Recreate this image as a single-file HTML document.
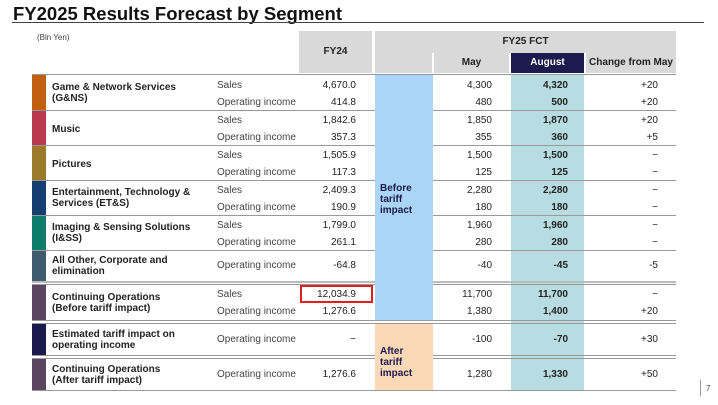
<!DOCTYPE html><html><head><style>
body{margin:0;width:718px;height:405px;background:#fff;font-family:"Liberation Sans","DejaVu Sans",sans-serif;position:relative;overflow:hidden;color:#222}
div{position:absolute;box-sizing:border-box}
.t{font-size:10px;white-space:nowrap;line-height:12px}
.b{font-weight:bold}
.r{text-align:right}
.c{text-align:center}
.hl{height:1px;background:#999;left:32px;width:644px}
</style></head><body>
<div style="left:13px;top:3px;font-size:18.5px;font-weight:bold;color:#111;white-space:nowrap">FY2025 Results Forecast by Segment</div>
<div style="left:12px;top:22px;width:692px;height:1px;background:#444"></div>
<div class="t" style="left:37px;top:32px;font-size:8px;color:#444">(Bln Yen)</div>
<div style="left:299px;top:31px;width:73px;height:42px;background:#d9d9d9"></div>
<div class="t b c" style="left:299px;top:46px;width:73px">FY24</div>
<div style="left:375px;top:31px;width:301px;height:22px;background:#d9d9d9"></div>
<div style="left:375px;top:53px;width:57px;height:20px;background:#d9d9d9"></div>
<div class="t b c" style="left:375px;top:36px;width:301px">FY25 FCT</div>
<div style="left:434px;top:53px;width:75px;height:20px;background:#d9d9d9"></div>
<div class="t b c" style="left:434px;top:57px;width:75px">May</div>
<div style="left:511px;top:53px;width:73px;height:20px;background:#1c1a4e"></div>
<div class="t b c" style="left:511px;top:57px;width:73px;color:#fff">August</div>
<div style="left:586px;top:53px;width:90px;height:20px;background:#d9d9d9"></div>
<div class="t b c" style="left:586px;top:57px;width:90px">Change from May</div>
<div class="hl" style="top:74px"></div>
<div style="left:511px;top:75px;width:73px;height:315px;background:#b7dde2"></div>

<div style="left:32px;top:75px;width:14px;height:35px;background:#c06010"></div>
<div style="left:32px;top:110px;width:14px;height:35px;background:#b83a4c"></div>
<div style="left:32px;top:145px;width:14px;height:35px;background:#9c7a2c"></div>
<div style="left:32px;top:180px;width:14px;height:35px;background:#143e70"></div>
<div style="left:32px;top:215px;width:14px;height:35px;background:#0c7d6c"></div>
<div style="left:32px;top:250px;width:14px;height:31px;background:#3e5b6e"></div>
<div style="left:32px;top:285px;width:14px;height:35px;background:#5a4660"></div>
<div style="left:32px;top:324px;width:14px;height:31px;background:#1a1a4e"></div>
<div style="left:32px;top:358px;width:14px;height:32px;background:#5a4660"></div>

<div class="hl" style="top:110px"></div><div class="hl" style="top:145px"></div>
<div class="hl" style="top:180px"></div><div class="hl" style="top:215px"></div>
<div class="hl" style="top:250px"></div><div class="hl" style="top:281px;height:2px;background:#bbb"></div>
<div class="hl" style="top:284px"></div><div class="hl" style="top:320px"></div>
<div class="hl" style="top:323px"></div><div class="hl" style="top:355px"></div>
<div class="hl" style="top:358px"></div><div class="hl" style="top:390px"></div>
<div style="left:375px;top:75px;width:58px;height:245px;background:#aad4f8"></div>
<div class="t b" style="left:380px;top:183px;line-height:11px;color:#1c1a4e">Before<br>tariff<br>impact</div>
<div style="left:375px;top:324px;width:58px;height:66px;background:#fcd9b6"></div>
<div class="t b" style="left:380px;top:346px;line-height:11px;color:#1c1a4e">After<br>tariff<br>impact</div>

<div class="t b" style="left:52px;top:82px;line-height:11px">Game &amp; Network Services<br>(G&amp;NS)</div>
<div class="t b" style="left:52px;top:124px">Music</div>
<div class="t b" style="left:52px;top:159px">Pictures</div>
<div class="t b" style="left:52px;top:187px;line-height:11px">Entertainment, Technology &amp;<br>Services (ET&amp;S)</div>
<div class="t b" style="left:52px;top:222px;line-height:11px">Imaging &amp; Sensing Solutions<br>(I&amp;SS)</div>
<div class="t b" style="left:52px;top:255px;line-height:11px">All Other, Corporate and<br>elimination</div>
<div class="t b" style="left:52px;top:292px;line-height:11px">Continuing Operations<br>(Before tariff impact)</div>
<div class="t b" style="left:52px;top:329px;line-height:11px">Estimated tariff impact on<br>operating income</div>
<div class="t b" style="left:52px;top:364px;line-height:11px">Continuing Operations<br>(After tariff impact)</div>

<div style="left:0;top:0;width:718px;height:405px">
<div class="t" style="left:217px;top:80px;color:#444">Sales</div><div class="t r" style="left:296px;width:60px;top:80px">4,670.0</div><div class="t r" style="left:432px;width:60px;top:80px">4,300</div><div class="t r b" style="left:508px;width:60px;top:80px">4,320</div><div class="t r" style="left:598px;width:60px;top:80px">+20</div>
<div class="t" style="left:217px;top:97px;color:#444">Operating income</div><div class="t r" style="left:296px;width:60px;top:97px">414.8</div><div class="t r" style="left:432px;width:60px;top:97px">480</div><div class="t r b" style="left:508px;width:60px;top:97px">500</div><div class="t r" style="left:598px;width:60px;top:97px">+20</div>
<div class="t" style="left:217px;top:115px;color:#444">Sales</div><div class="t r" style="left:296px;width:60px;top:115px">1,842.6</div><div class="t r" style="left:432px;width:60px;top:115px">1,850</div><div class="t r b" style="left:508px;width:60px;top:115px">1,870</div><div class="t r" style="left:598px;width:60px;top:115px">+20</div>
<div class="t" style="left:217px;top:132px;color:#444">Operating income</div><div class="t r" style="left:296px;width:60px;top:132px">357.3</div><div class="t r" style="left:432px;width:60px;top:132px">355</div><div class="t r b" style="left:508px;width:60px;top:132px">360</div><div class="t r" style="left:598px;width:60px;top:132px">+5</div>
<div class="t" style="left:217px;top:150px;color:#444">Sales</div><div class="t r" style="left:296px;width:60px;top:150px">1,505.9</div><div class="t r" style="left:432px;width:60px;top:150px">1,500</div><div class="t r b" style="left:508px;width:60px;top:150px">1,500</div><div class="t r" style="left:598px;width:60px;top:150px">−</div>
<div class="t" style="left:217px;top:167px;color:#444">Operating income</div><div class="t r" style="left:296px;width:60px;top:167px">117.3</div><div class="t r" style="left:432px;width:60px;top:167px">125</div><div class="t r b" style="left:508px;width:60px;top:167px">125</div><div class="t r" style="left:598px;width:60px;top:167px">−</div>
<div class="t" style="left:217px;top:185px;color:#444">Sales</div><div class="t r" style="left:296px;width:60px;top:185px">2,409.3</div><div class="t r" style="left:432px;width:60px;top:185px">2,280</div><div class="t r b" style="left:508px;width:60px;top:185px">2,280</div><div class="t r" style="left:598px;width:60px;top:185px">−</div>
<div class="t" style="left:217px;top:202px;color:#444">Operating income</div><div class="t r" style="left:296px;width:60px;top:202px">190.9</div><div class="t r" style="left:432px;width:60px;top:202px">180</div><div class="t r b" style="left:508px;width:60px;top:202px">180</div><div class="t r" style="left:598px;width:60px;top:202px">−</div>
<div class="t" style="left:217px;top:220px;color:#444">Sales</div><div class="t r" style="left:296px;width:60px;top:220px">1,799.0</div><div class="t r" style="left:432px;width:60px;top:220px">1,960</div><div class="t r b" style="left:508px;width:60px;top:220px">1,960</div><div class="t r" style="left:598px;width:60px;top:220px">−</div>
<div class="t" style="left:217px;top:237px;color:#444">Operating income</div><div class="t r" style="left:296px;width:60px;top:237px">261.1</div><div class="t r" style="left:432px;width:60px;top:237px">280</div><div class="t r b" style="left:508px;width:60px;top:237px">280</div><div class="t r" style="left:598px;width:60px;top:237px">−</div>
<div class="t" style="left:217px;top:260px;color:#444">Operating income</div><div class="t r" style="left:296px;width:60px;top:260px">-64.8</div><div class="t r" style="left:432px;width:60px;top:260px">-40</div><div class="t r b" style="left:508px;width:60px;top:260px">-45</div><div class="t r" style="left:598px;width:60px;top:260px">-5</div>
<div style="left:300px;top:285px;width:73px;height:18px;border:2px solid #e02020"></div>
<div class="t" style="left:217px;top:289px;color:#444">Sales</div><div class="t r" style="left:296px;width:60px;top:289px">12,034.9</div><div class="t r" style="left:432px;width:60px;top:289px">11,700</div><div class="t r b" style="left:508px;width:60px;top:289px">11,700</div><div class="t r" style="left:598px;width:60px;top:289px">−</div>
<div class="t" style="left:217px;top:306px;color:#444">Operating income</div><div class="t r" style="left:296px;width:60px;top:306px">1,276.6</div><div class="t r" style="left:432px;width:60px;top:306px">1,380</div><div class="t r b" style="left:508px;width:60px;top:306px">1,400</div><div class="t r" style="left:598px;width:60px;top:306px">+20</div>
<div class="t" style="left:217px;top:334px;color:#444">Operating income</div><div class="t r" style="left:296px;width:60px;top:334px">−</div><div class="t r" style="left:432px;width:60px;top:334px">-100</div><div class="t r b" style="left:508px;width:60px;top:334px">-70</div><div class="t r" style="left:598px;width:60px;top:334px">+30</div>
<div class="t" style="left:217px;top:369px;color:#444">Operating income</div><div class="t r" style="left:296px;width:60px;top:369px">1,276.6</div><div class="t r" style="left:432px;width:60px;top:369px">1,280</div><div class="t r b" style="left:508px;width:60px;top:369px">1,330</div><div class="t r" style="left:598px;width:60px;top:369px">+50</div>
</div>
<div style="left:700px;top:380px;width:1px;height:16px;background:#999"></div>
<div class="t" style="left:706px;top:383px;font-size:8px;color:#444">7</div>
</body></html>
